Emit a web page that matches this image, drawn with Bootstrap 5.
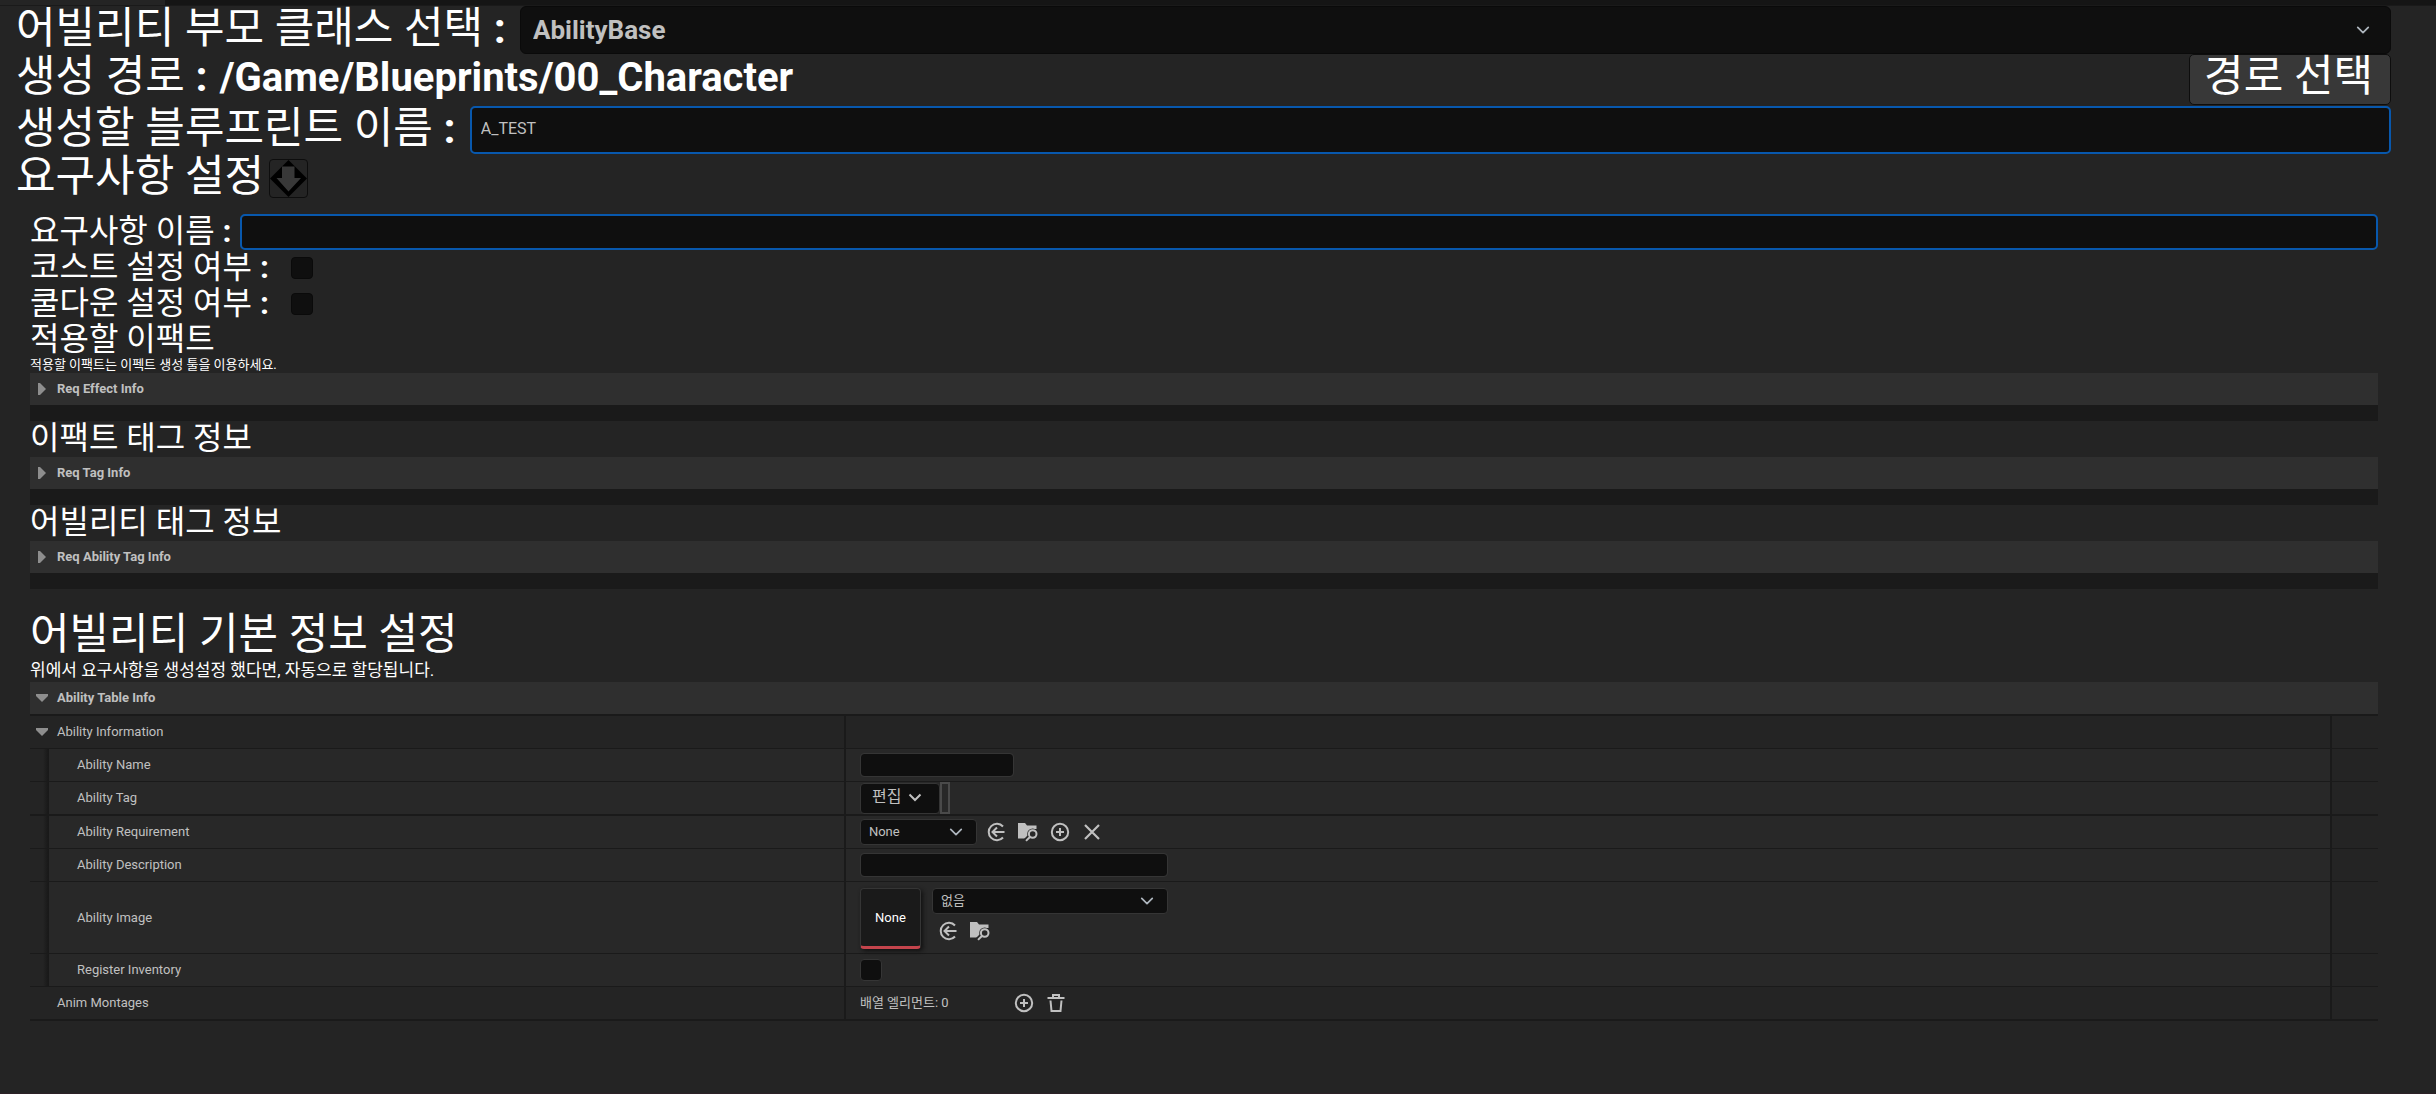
<!DOCTYPE html>
<html lang="ko" data-bs-theme="dark">
<head>
<meta charset="utf-8">
<meta name="viewport" content="width=device-width, initial-scale=1">
<title>Ability Creator</title>
<link rel="stylesheet" href="https://cdn.jsdelivr.net/npm/bootstrap@5.3.0/dist/css/bootstrap.min.css">
<style>
  body { background:#242424; color:#c0c0c0; font-family:Roboto,"Noto Sans CJK KR",sans-serif; font-size:13px; line-height:16px; min-height:100vh; border-bottom:1px solid #2c2126; }
  .tabstrip { height:6px; background:#151515; border-bottom:1px solid #1a1a1a; }
  .tabstrip span { width:165px; background:#242424; }
  .tool { padding:0 45px 0 16px; }
  .inset { padding:0 13px 0 14px; margin-top:12px; }
  .big { font-size:43px; line-height:45px; padding-bottom:3px; font-weight:400; color:#fff; margin:0; white-space:nowrap; }
  .mid { font-size:32px; line-height:34px; padding-bottom:2px; font-weight:400; color:#fff; margin:0; white-space:nowrap; }
  .path { font-size:40px; font-weight:700; color:#fff; line-height:45px; margin-left:12px; }
  .field-lg { margin-left:14px; }
  .field-check { margin-left:22px !important; }
  .line-lg { height:48px; }
  .path-line { height:52px; }
  .hint { color:#fff; margin:0; }
  .hint-sm { font-size:13px; line-height:13px; padding-bottom:2px; }
  .hint-md { font-size:17px; line-height:20px; padding-bottom:2px; }
  .basic { margin-top:23px; }
  .form-control, .form-select { background-color:#0f0f0f; color:#c0c0c0; border:1px solid #353535; border-radius:4px; font-size:13px; line-height:16px; padding:3px 8px; height:24px; min-height:0; }
  .form-select { --bs-form-select-bg-img:url("data:image/svg+xml,%3csvg xmlns='http://www.w3.org/2000/svg' viewBox='0 0 14 14'%3e%3cpath fill='none' stroke='%23c0c0c0' stroke-width='2' d='M1.500 4.500 7 10l5.500-5.500'/%3e%3c/svg%3e"); background-size:14px 14px; background-position:right 13px center; height:26px; padding:4px 32px 4px 8px; }
  .parent-class { height:48px; border-color:#0a0a0a; border-radius:6px; font-size:26px; line-height:32px; font-weight:700; padding:7px 48px 7px 12px; background-position:right 20px center; }
  .focus-blue { border:2px solid #0858ad; border-radius:5px; font-size:16px; padding:0 9px 4px; }
  .name-lg { height:48px; }
  .name-md { height:36px; }
  .btn-path { background:#383838; color:#fff; border:1px solid #0d0d0d; border-radius:5px; font-size:43px; line-height:43px; padding:0 17px 6px 14px; height:51px; }
  .btn-drop { background:#242424; border:1px solid #0d0d0d; border-radius:4px; width:39px; height:39px; padding:0; margin-left:5px; line-height:0; }
  .form-check-input { background-color:#0f0f0f; border:1px solid #0a0a0a; border-radius:4px !important; width:22px; height:22px; margin:0; }
  .grid-check { border-color:#353535; }
  .cat { background:#2f2f2f; color:#c0c0c0; font-weight:700; font-size:13px; line-height:16px; border:0; height:32px; width:100%; padding:0 6px; gap:9px; text-align:left; }
  .cat svg, .twisty svg { width:12px; height:14px; display:block; }
  .cat-end { height:16px; background:#1a1a1a; }
  .props { border-top:2px solid #1a1a1a; }
  .prop { min-height:33px; border-bottom:1px solid #1a1a1a; }
  .prop-strong { min-height:34px; border-bottom-width:2px; }
  .prop-tall { min-height:72px; }
  .prop-name { width:34.75%; border-right:2px solid #1a1a1a; }
  .prop-name .cap { padding-left:27px; }
  .prop-name.kid label { padding-left:28px; }
  .twisty { background:none; border:0; padding:0 6px; color:inherit; gap:9px; }
  .prop-value { padding-left:14px; }
  .prop-end { width:48px; border-left:2px solid #1a1a1a; background:#242424; }
  .nest { background:#282828; }
  .rail { width:19px; background:linear-gradient(90deg,#242424 13px,#191919 18px); }
  .w-name { width:154px; }
  .w-desc { width:308px; }
  .w-asset { width:117px; }
  .w-tex { width:236px; }
  .w-count { width:142px; }
  .btn-edit { background:#0f0f0f; color:#c0c0c0; border:1px solid #353535; border-radius:4px; font-size:16px; line-height:20px; padding:0 17px 2px 11px; height:31px; gap:7px; }
  .tag-well { width:10px; height:32px; border:2px solid #4a4a4a; }
  .ico { background:none; border:0; padding:0; width:20px; height:20px; line-height:0; color:#c0c0c0; }
  .ico svg { width:20px; height:20px; }
  .icons { gap:12px; }
  .asset-line { gap:9px; }
  .thumb-line { gap:11px; padding-top:6px; }
  .thumb-side { gap:7px; }
  .pick { padding-left:6px; }
  .thumb { width:61px; height:61px; background:#1a1a1a; color:#fff; border:1px solid #353535; border-bottom:3px solid #c4444c; border-radius:4px; box-shadow:2px 2px 4px #111; }
</style>
<script src="https://cdn.jsdelivr.net/npm/bootstrap@5.3.0/dist/js/bootstrap.bundle.min.js"></script>
</head>
<body>
<svg class="d-none" aria-hidden="true">
  <symbol id="i-right" viewBox="0 0 12 14"><path fill="#8e8e8e" d="M2 1h2l6 6-6 6H2z"/></symbol>
  <symbol id="i-down" viewBox="0 0 12 14"><path fill="#8e8e8e" d="M0 3h12v2l-6 6-6-6z"/></symbol>
  <symbol id="i-use" viewBox="0 0 20 20"><path fill="none" stroke="currentColor" stroke-width="2" d="M17 4.500A8.200 8.200 0 1 0 17 15.500M18.500 10H6.500M11 5.500 6.500 10l4.500 4.500"/></symbol>
  <symbol id="i-browse" viewBox="0 0 20 20"><path fill="currentColor" d="M0 1h7l2 2.500h9.500V7H14l-3 9.500H0z"/><circle cx="14.700" cy="12" r="5.500" fill="#282828"/><path stroke="#282828" stroke-width="5" d="m12.500 14-5 5"/><circle cx="14.700" cy="12" r="3.800" fill="none" stroke="currentColor" stroke-width="2"/><path stroke="currentColor" stroke-width="2" d="m12.200 14.700-4.200 4.200"/></symbol>
  <symbol id="i-plus" viewBox="0 0 20 20"><circle cx="10" cy="10" r="8.200" fill="none" stroke="currentColor" stroke-width="2"/><path stroke="currentColor" stroke-width="2" d="M10 6v8M6 10h8"/></symbol>
  <symbol id="i-x" viewBox="0 0 20 20"><path stroke="currentColor" stroke-width="2.200" d="m3 3 14 14M17 3 3 17"/></symbol>
  <symbol id="i-trash" viewBox="0 0 20 20"><path fill="none" stroke="currentColor" stroke-width="2" d="M1.500 5h17M4.500 7.500 5.500 18h9l1-10.500M7 4V2h6v2"/></symbol>
</svg>

<div class="tabstrip d-flex"><span></span></div>
<main class="tool">
  <div class="d-flex align-items-start line-lg">
    <label class="big" for="parent">어빌리티 부모 클래스 선택 <b>:</b></label>
    <select id="parent" class="form-select parent-class field-lg flex-fill"><option>AbilityBase</option></select>
  </div>
  <div class="d-flex align-items-start justify-content-between path-line">
    <div class="d-flex align-items-baseline"><span class="big">생성 경로 <b>:</b></span><span class="path">/Game/Blueprints/00_Character</span></div>
    <button type="button" class="btn btn-path">경로 선택</button>
  </div>
  <div class="d-flex align-items-start line-lg">
    <label class="big" for="bp">생성할 블루프린트 이름 <b>:</b></label>
    <input id="bp" class="form-control focus-blue name-lg field-lg flex-fill" value="A_TEST">
  </div>
  <div class="d-flex align-items-center line-lg">
    <h1 class="big">요구사항 설정</h1>
    <button type="button" class="btn btn-drop" aria-label="접기">
      <svg width="37" height="37" viewBox="0 0 37 37"><path d="M18.500 0 37 18.500 18.500 37 0 18.500z"/><path fill="#383838" d="M12 6.500h12.500V18H31L18.500 31.500 6.500 18H12z"/></svg>
    </button>
  </div>

  <div class="inset">
    <div class="d-flex">
      <label class="mid" for="rq">요구사항 이름 <b>:</b></label>
      <input id="rq" class="form-control focus-blue name-md ms-2 flex-fill">
    </div>
    <div class="d-flex align-items-center">
      <label class="mid" for="cost">코스트 설정 여부 <b>:</b></label>
      <input id="cost" type="checkbox" class="form-check-input field-check">
    </div>
    <div class="d-flex align-items-center">
      <label class="mid" for="cool">쿨다운 설정 여부 <b>:</b></label>
      <input id="cool" type="checkbox" class="form-check-input field-check">
    </div>
    <h2 class="mid">적용할 이팩트</h2>
    <p class="hint hint-sm">적용할 이팩트는 이펙트 생성 툴을 이용하세요.</p>
    <button type="button" class="cat d-flex align-items-center"><svg><use href="#i-right"/></svg>Req Effect Info</button>
    <div class="cat-end"></div>
    <h2 class="mid">이팩트 태그 정보</h2>
    <button type="button" class="cat d-flex align-items-center"><svg><use href="#i-right"/></svg>Req Tag Info</button>
    <div class="cat-end"></div>
    <h2 class="mid">어빌리티 태그 정보</h2>
    <button type="button" class="cat d-flex align-items-center"><svg><use href="#i-right"/></svg>Req Ability Tag Info</button>
    <div class="cat-end"></div>

    <h1 class="big basic">어빌리티 기본 정보 설정</h1>
    <p class="hint hint-md">위에서 요구사항을 생성설정 했다면, 자동으로 할당됩니다.</p>
    <button type="button" class="cat d-flex align-items-center"><svg><use href="#i-down"/></svg>Ability Table Info</button>

    <div class="props">
    <div class="prop d-flex">
      <div class="prop-name d-flex align-items-center"><button type="button" class="twisty d-flex align-items-center"><svg><use href="#i-down"/></svg>Ability Information</button></div>
      <div class="prop-value flex-fill"></div><div class="prop-end"></div>
    </div>
    <div class="prop nest d-flex">
      <div class="prop-name kid d-flex"><span class="rail"></span><label class="align-self-center" for="an">Ability Name</label></div>
      <div class="prop-value flex-fill d-flex align-items-center"><input id="an" class="form-control w-name"></div><div class="prop-end"></div>
    </div>
    <div class="prop prop-strong nest d-flex">
      <div class="prop-name kid d-flex"><span class="rail"></span><label class="align-self-center" for="at">Ability Tag</label></div>
      <div class="prop-value flex-fill d-flex align-items-center">
        <button id="at" type="button" class="btn btn-edit d-flex align-items-center">편집<svg width="14" height="14" viewBox="0 0 14 14"><path fill="none" stroke="#c0c0c0" stroke-width="2" d="M1.500 4.500 7 10l5.500-5.500"/></svg></button>
        <span class="tag-well"></span>
      </div><div class="prop-end"></div>
    </div>
    <div class="prop nest d-flex">
      <div class="prop-name kid d-flex"><span class="rail"></span><label class="align-self-center" for="ar">Ability Requirement</label></div>
      <div class="prop-value flex-fill d-flex align-items-center asset-line">
        <select id="ar" class="form-select w-asset"><option>None</option></select>
        <div class="d-flex icons">
          <button type="button" class="ico" aria-label="사용"><svg><use href="#i-use"/></svg></button>
          <button type="button" class="ico" aria-label="찾아보기"><svg><use href="#i-browse"/></svg></button>
          <button type="button" class="ico" aria-label="추가"><svg><use href="#i-plus"/></svg></button>
          <button type="button" class="ico" aria-label="지우기"><svg><use href="#i-x"/></svg></button>
        </div>
      </div><div class="prop-end"></div>
    </div>
    <div class="prop nest d-flex">
      <div class="prop-name kid d-flex"><span class="rail"></span><label class="align-self-center" for="ad">Ability Description</label></div>
      <div class="prop-value flex-fill d-flex align-items-center"><input id="ad" class="form-control w-desc"></div><div class="prop-end"></div>
    </div>
    <div class="prop prop-tall nest d-flex">
      <div class="prop-name kid d-flex"><span class="rail"></span><label class="align-self-center" for="ai">Ability Image</label></div>
      <div class="prop-value flex-fill d-flex align-items-start thumb-line">
        <div class="thumb d-flex align-items-center justify-content-center">None</div>
        <div class="thumb-side d-flex flex-column">
          <select id="ai" class="form-select w-tex"><option>없음</option></select>
          <div class="d-flex icons pick">
            <button type="button" class="ico" aria-label="사용"><svg><use href="#i-use"/></svg></button>
            <button type="button" class="ico" aria-label="찾아보기"><svg><use href="#i-browse"/></svg></button>
          </div>
        </div>
      </div><div class="prop-end"></div>
    </div>
    <div class="prop nest d-flex">
      <div class="prop-name kid d-flex"><span class="rail"></span><label class="align-self-center" for="ri">Register Inventory</label></div>
      <div class="prop-value flex-fill d-flex align-items-center"><input id="ri" type="checkbox" class="form-check-input grid-check"></div><div class="prop-end"></div>
    </div>
    <div class="prop prop-strong d-flex">
      <div class="prop-name d-flex align-items-center"><span class="cap">Anim Montages</span></div>
      <div class="prop-value flex-fill d-flex align-items-center icons">
        <span class="w-count">배열 엘리먼트: 0</span>
        <button type="button" class="ico" aria-label="추가"><svg><use href="#i-plus"/></svg></button>
        <button type="button" class="ico" aria-label="비우기"><svg><use href="#i-trash"/></svg></button>
      </div><div class="prop-end"></div>
    </div>
    </div>
  </div>
</main>
</body>
</html>
